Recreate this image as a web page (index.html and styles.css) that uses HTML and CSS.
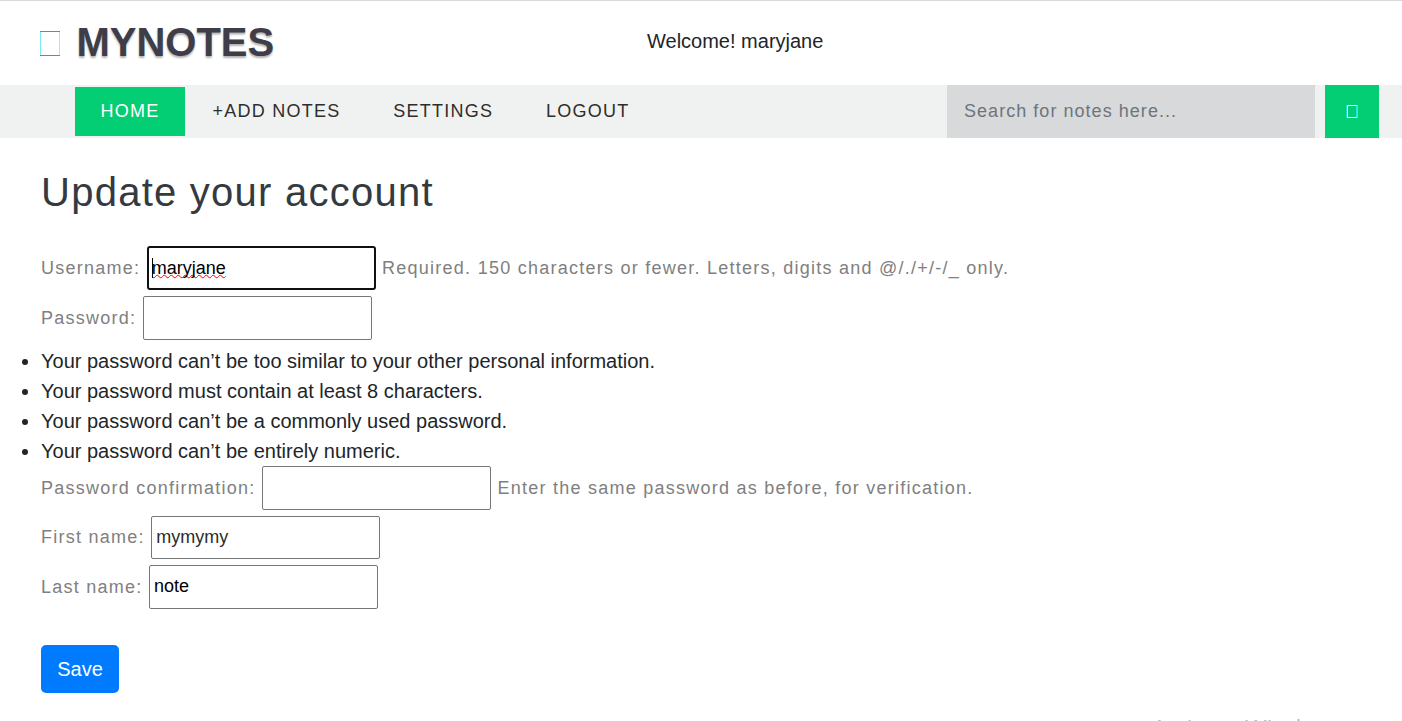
FILE: index.html
```
<!DOCTYPE html>
<html lang="en">
<head>
<meta charset="utf-8">
<title>MyNotes</title>
<link rel="stylesheet" href="styles.css">
</head>
<body>
<header class="header">
  <a class="logo"><svg class="logo-icon" width="22" height="25" viewBox="0 0 22 25"><path d="M1.5 1v23" stroke="#7fe8f4"/><path d="M20.5 1v23" stroke="#c9e6a3"/><path d="M1 .5h20M1 24.5h20" stroke="#17b978"/></svg><span>MYNOTES</span></a>
  <span class="welcome">Welcome! maryjane</span>
</header>
<nav class="nav">
  <a class="nav-link active">HOME</a>
  <a class="nav-link">+ADD NOTES</a>
  <a class="nav-link">SETTINGS</a>
  <a class="nav-link">LOGOUT</a>
  <form class="search">
    <input class="search-input" type="text" placeholder="Search for notes here...">
    <button class="search-button" type="button" aria-label="Search"><svg width="12" height="13" viewBox="0 0 12 13" fill="none"><path d="M.5 0v13" stroke="#12dfd0"/><path d="M11.5 0v13" stroke="#7edc76"/><path d="M1.5 .5h9v12h-9z" stroke="#f4fffa"/><path d="M10.5 1v11" stroke="#25e5df"/></svg></button>
  </form>
</nav>
<main class="content">
  <h1 class="title">Update your account</h1>
  <div class="row"><label class="label">Username:</label><div class="field focused"><span class="misspelled">maryjane</span><i class="caret"></i></div><span class="help">Required. 150 characters or fewer. Letters, digits and @/./+/-/_ only.</span></div>
  <div class="row"><label class="label">Password:</label><input class="field" type="password"></div>
  <ul class="rules">
    <li>Your password can’t be too similar to your other personal information.</li>
    <li>Your password must contain at least 8 characters.</li>
    <li>Your password can’t be a commonly used password.</li>
    <li>Your password can’t be entirely numeric.</li>
  </ul>
  <div class="row"><label class="label">Password confirmation:</label><input class="field" type="password"><span class="help">Enter the same password as before, for verification.</span></div>
  <div class="row"><label class="label">First name:</label><input class="field soft" type="text" value="mymymy" spellcheck="false"></div>
  <div class="row"><label class="label">Last name:</label><input class="field" type="text" value="note"></div>
  <button class="save" type="button">Save</button>
</main>
<div class="watermark">Activate Windows</div>
</body>
</html>
```
FILE: styles.css
```
* { box-sizing: border-box; }
body {
  margin: 0;
  height: 721px;
  overflow: hidden;
  position: relative;
  background: #fff;
  color: #212529;
  font: 20px/30px "Liberation Sans", Arial, sans-serif;
}
.header {
  height: 85px;
  border-top: 1px solid #d9d9d9;
  display: flex;
  align-items: flex-start;
  padding-left: 39px;
}
.logo {
  display: flex;
  width: 608px;
  padding-top: 17px;
  color: #3e3d48;
  font-size: 40px;
  line-height: 48px;
  font-weight: bold;
  text-shadow: 0 2px 2px rgba(0, 0, 0, .3);
}
.logo-icon { margin: 13px 15.4px 0 0; }
.welcome { padding-top: 25px; }
.nav {
  height: 53px;
  background: #f0f2f1;
  display: flex;
  align-items: center;
  padding: 0 23px 0 75px;
}
.nav-link {
  height: 49px;
  padding: 0 25.4px;
  margin-right: 2px;
  font-size: 18px;
  line-height: 48px;
  letter-spacing: 1.25px;
  color: #2f2d2b;
  white-space: nowrap;
}
.nav-link.active { background: #03ce74; color: #fff; width: 110px; }
.search { display: flex; gap: 10px; margin-left: auto; }
.search-input {
  width: 368px;
  height: 53px;
  border: 0;
  padding: 0 17px;
  background: #d8d9db;
  font: 18px "Liberation Sans", Arial, sans-serif;
  letter-spacing: 1.04px;
}
.search-input::placeholder { color: #6c757d; }
.search-button {
  width: 54px;
  height: 53px;
  border: 0;
  padding: 0;
  background: #03ce74;
  display: flex;
  align-items: center;
  justify-content: center;
}
.content { padding: 24px 41px 0; }
.title {
  margin: 0 0 21.4px;
  font-size: 40px;
  line-height: 60px;
  font-weight: normal;
  letter-spacing: 1.25px;
  color: #343a40;
}
.row { display: flex; align-items: center; height: 49.6px; white-space: nowrap; }
.label, .help { font-size: 18px; letter-spacing: 1.25px; color: #808080; }
.label { margin-right: 6.5px; }
.help { margin-left: 6.3px; }
.field {
  width: 229px;
  height: 43.6px;
  padding: 1px 4px;
  border: 1px solid #767676;
  border-radius: 2px;
  background: #fff;
  color: #000;
  font: 18px "Liberation Sans", Arial, sans-serif;
  outline: 0;
}
.field.soft { color: #2c2c2c; }
.field.focused {
  display: flex;
  align-items: center;
  position: relative;
  border: 2px solid #101010;
  border-radius: 3px;
  padding: 2px 3px 1px;
}
.misspelled {
  text-decoration: underline wavy #f00 1.3px;
  text-decoration-skip-ink: none;
  text-underline-offset: 0;
}
.caret { position: absolute; left: 3px; top: 10px; width: 1px; height: 20px; background: #000; }
.rules { margin: 3.5px 0 -3.1px; padding: 0; }
.save {
  display: block;
  width: 78px;
  height: 48px;
  margin-top: 33px;
  padding: 2px 0 0;
  border: 0;
  border-radius: 5px;
  background: #007bff;
  color: #fff;
  font: 20px "Liberation Sans", Arial, sans-serif;
}
.watermark {
  position: absolute;
  left: 1152px;
  top: 712px;
  font: 23.5px/33px "Open Sans", sans-serif;
  color: #b8b8b8;
  white-space: nowrap;
}
```
